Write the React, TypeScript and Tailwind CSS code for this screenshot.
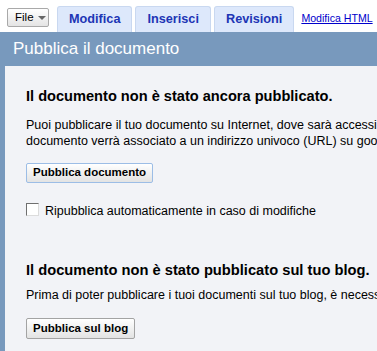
import React from 'react';

const tabs = ['Modifica', 'Inserisci', 'Revisioni'];

const App: React.FC = () => {
  return (
    <div className="w-[377px] h-[351px] overflow-hidden bg-white font-['Liberation_Sans',Arial,sans-serif] text-black">
      {/* top bar */}
      <div className="flex h-[32px] items-end pl-[7px] whitespace-nowrap">
        <button className="self-start mt-[8px] flex h-[19px] w-[42px] items-center rounded-[2px] border border-[#a9a9a9] bg-gradient-to-b from-white to-[#e4e4e4] pl-[7px] text-[11.5px] leading-none text-black">
          File
          <span className="ml-[4px] mt-[1px] h-0 w-0 border-x-[4px] border-t-[4px] border-x-transparent border-t-[#666]" />
        </button>
        <div className="ml-[8px] flex h-[26px] items-end gap-[3px]">
          {tabs.map((t) => (
            <div
              key={t}
              className="flex h-[26px] items-center rounded-t-[3px] border border-b-0 border-[#c9d8f0] bg-[#dde8fb] px-[11px] text-[12.7px] font-bold text-[#2035b5]"
            >
              {t}
            </div>
          ))}
        </div>
        <a className="ml-[7px] mb-[8px] text-[10.6px] leading-none text-[#0000cc] underline">Modifica HTML</a>
      </div>

      {/* header */}
      <div className="h-[34px] bg-[#7899bd] pl-[13px] text-[17px] leading-[34px] text-white">
        Pubblica il documento
      </div>

      {/* content */}
      <div className="h-[300px] w-[700px] border-l-[5px] border-[#7899bd] bg-[#f2f3f7] pl-[21px] whitespace-nowrap">
        <h2 className="pt-[22px] text-[14.6px] font-bold leading-[17px]">
          Il documento non è stato ancora pubblicato.
        </h2>
        <p className="mt-[12px] text-[12.5px] leading-[16px]">
          Puoi pubblicare il tuo documento su Internet, dove sarà accessibile a tutti. Il
          <br />
          documento verrà associato a un indirizzo univoco (URL) su google.com.
        </p>
        <button className="mt-[14px] flex h-[20px] items-center rounded-[2px] border border-[#9cbde6] bg-gradient-to-b from-white to-[#e3e3e3] px-[6px] text-[11.5px] font-bold">
          Pubblica documento
        </button>
        <label className="mt-[20px] flex items-start">
          <span className="h-[13px] w-[13px] border border-t-[#6f6f6f] border-l-[#6f6f6f] border-r-[#dcdcdc] border-b-[#dcdcdc] bg-white" />
          <span className="ml-[6px] text-[12.5px] leading-[16px]">Ripubblica automaticamente in caso di modifiche</span>
        </label>
        <h2 className="mt-[43px] text-[14.7px] font-bold leading-[17px]">
          Il documento non è stato pubblicato sul tuo blog.
        </h2>
        <p className="mt-[8px] text-[12.5px] leading-[16px]">
          Prima di poter pubblicare i tuoi documenti sul tuo blog, è necessario configurare le impostazioni.
        </p>
        <button className="mt-[15px] flex h-[21px] items-center rounded-[2px] border border-[#a3a3a3] bg-gradient-to-b from-white to-[#e3e3e3] px-[6px] text-[11.5px] font-bold">
          Pubblica sul blog
        </button>
      </div>
    </div>
  );
};

export default App;
